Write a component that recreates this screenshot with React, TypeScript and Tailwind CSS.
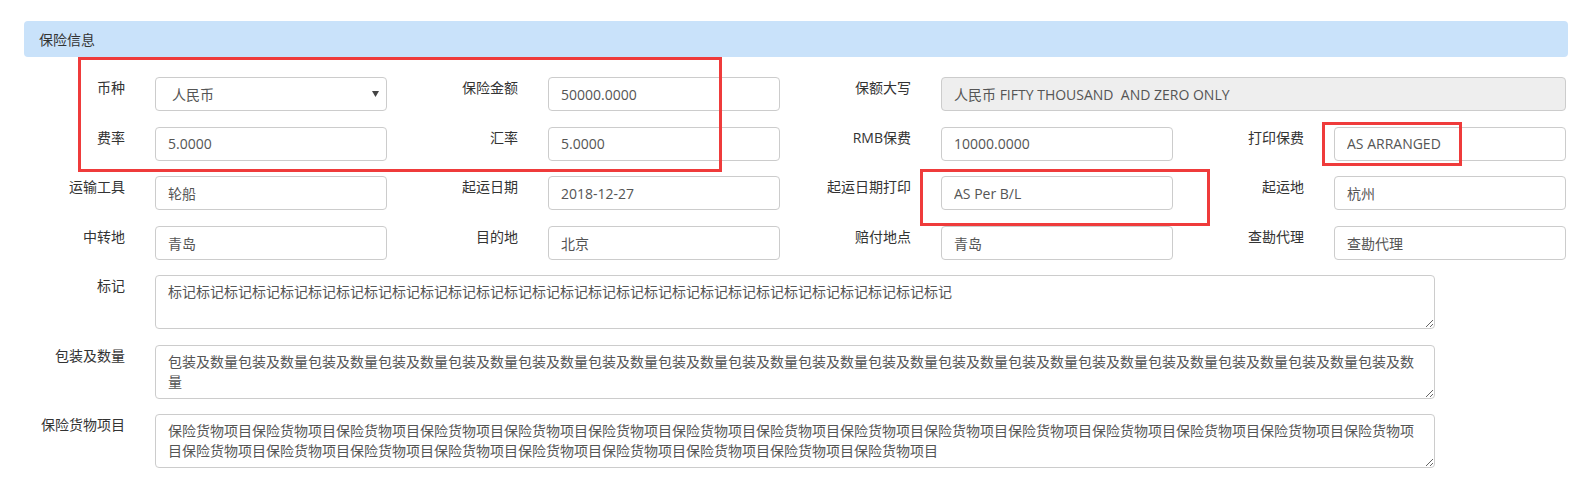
import React from 'react';

const FONT = "font-['Open_Sans','Noto_Sans_CJK_SC',sans-serif]";

const inputCls =
  'block w-full h-[34px] px-3 text-[14px] leading-5 text-[#555] border border-[#ccc] rounded-[4px] outline-none';

interface FieldProps {
  label: string;
  value: string;
  disabled?: boolean;
  wide?: boolean;
}

const Field: React.FC<FieldProps> = ({ label, value, disabled, wide }) => (
  <div className={`flex ${wide ? 'w-[786px]' : 'w-[393px]'}`}>
    <label className="w-[131px] shrink-0 pr-[15px] pt-px text-right text-[14px] leading-5 text-[#333]">
      {label}
    </label>
    <div className="flex-1 px-[15px]">
      <input
        readOnly
        value={value}
        className={`${inputCls} ${disabled ? 'bg-[#eee]' : 'bg-white'}`}
      />
    </div>
  </div>
);

const SelectField: React.FC<{ label: string; value: string }> = ({ label, value }) => (
  <div className="flex w-[393px]">
    <label className="w-[131px] shrink-0 pr-[15px] pt-px text-right text-[14px] leading-5 text-[#333]">
      {label}
    </label>
    <div className="flex-1 px-[15px]">
      <div className="relative">
        <select
          defaultValue={value}
          className="block w-full h-[34px] appearance-none pl-4 pr-6 text-[14px] text-[#555] bg-white border border-[#ccc] rounded-[4px] outline-none"
        >
          <option value="人民币">人民币</option>
          <option value="美元">美元</option>
        </select>
        <svg
          className="absolute right-[8px] top-[14px] pointer-events-none"
          width="7"
          height="6"
          viewBox="0 0 7 6"
        >
          <path d="M0 0 L7 0 L3.5 6 Z" fill="#444" />
        </svg>
      </div>
    </div>
  </div>
);

const AreaField: React.FC<{ label: string; value: string }> = ({ label, value }) => (
  <div className="flex">
    <label className="w-[131px] shrink-0 pr-[15px] pt-px text-right text-[14px] leading-5 text-[#333]">
      {label}
    </label>
    <div className="w-[1310px] px-[15px]">
      <textarea
        readOnly
        rows={2}
        value={value}
        className="block w-full h-[54px] px-3 py-[6px] text-[14px] leading-5 text-[#555] bg-white border border-[#ccc] rounded-[4px] outline-none"
      />
    </div>
  </div>
);

const mark = '标记'.repeat(28);
const pack = '包装及数量'.repeat(18);
const goods = '保险货物项目'.repeat(24);

export default function App() {
  return (
    <div className={`relative w-[1585px] h-[479px] overflow-hidden bg-white ${FONT}`}>
      <div className="pt-[21px] pl-[24px]">
        <div className="w-[1544px] h-[36px] flex items-center pl-[15px] rounded-[4px] bg-[#c9e2fa] text-[14px] text-[#333]">
          保险信息
        </div>
      </div>

      <div className="pt-5 pl-[9px] flex flex-col gap-[15.5px]">
        <div className="flex">
          <SelectField label="币种" value="人民币" />
          <Field label="保险金额" value="50000.0000" />
          <Field label="保额大写" value="人民币 FIFTY THOUSAND  AND ZERO ONLY" disabled wide />
        </div>
        <div className="flex">
          <Field label="费率" value="5.0000" />
          <Field label="汇率" value="5.0000" />
          <Field label="RMB保费" value="10000.0000" />
          <Field label="打印保费" value="AS ARRANGED" />
        </div>
        <div className="flex">
          <Field label="运输工具" value="轮船" />
          <Field label="起运日期" value="2018-12-27" />
          <Field label="起运日期打印" value="AS Per B/L" />
          <Field label="起运地" value="杭州" />
        </div>
        <div className="flex">
          <Field label="中转地" value="青岛" />
          <Field label="目的地" value="北京" />
          <Field label="赔付地点" value="青岛" />
          <Field label="查勘代理" value="查勘代理" />
        </div>
        <AreaField label="标记" value={mark} />
        <AreaField label="包装及数量" value={pack} />
        <AreaField label="保险货物项目" value={goods} />
      </div>

      {/* red annotation boxes */}
      <div className="absolute left-[78px] top-[57px] w-[644px] h-[115px] border-[3px] border-[#ef3b3b] pointer-events-none" />
      <div className="absolute left-[920px] top-[169px] w-[290px] h-[57px] border-[3px] border-[#ef3b3b] pointer-events-none" />
      <div className="absolute left-[1322px] top-[122px] w-[140px] h-[44px] border-[3px] border-[#ef3b3b] pointer-events-none" />
    </div>
  );
}
